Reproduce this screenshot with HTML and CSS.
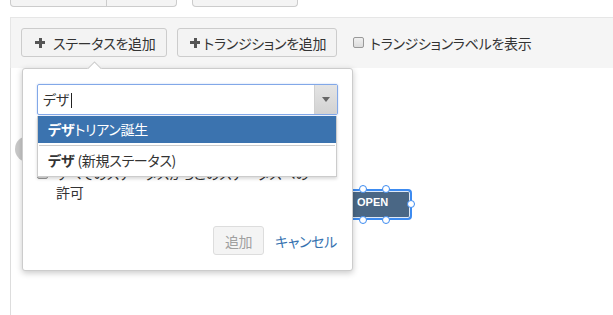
FILE: index.html
```html
<!DOCTYPE html>
<html lang="ja">
<head>
<meta charset="utf-8">
<link rel="stylesheet" href="styles.css">
</head>
<body>
<div class="tabs">
  <div class="tab-group g1"><span class="tab t1"></span><span class="tab t2"></span></div>
  <div class="tab-group g2"></div>
</div>
<div class="toolbar">
  <button class="btn"><span class="plus"></span>ステータスを追加</button>
  <button class="btn b2"><span class="plus"></span>トランジションを追加</button>
  <label class="chk"><span class="box"></span>トランジションラベルを表示</label>
</div>
<div class="canvas">
  <div class="ghost-circle"></div>
  <div class="node">
    <span class="node-label">OPEN</span>
    <span class="h h1"></span><span class="h h2"></span><span class="h h3"></span><span class="h h4"></span><span class="h h5"></span>
  </div>
  <div class="popup">
    <div class="arrow"></div>
    <div class="select">
      <span class="select-text">デザ<span class="caret"></span></span>
      <span class="select-btn"><span class="tri"></span></span>
    </div>
    <div class="allow">
      <span class="box small"></span>
      <span class="allow-text">すべてのステータスからこのステータスへの<br>許可</span>
    </div>
    <div class="actions">
      <button class="btn-disabled">追加</button>
      <a class="cancel">キャンセル</a>
    </div>
    <ul class="list">
      <li class="item active"><b>デザ</b>トリアン誕生</li>
      <li class="sep"></li>
      <li class="item"><b>デザ</b> (新規ステータス)</li>
    </ul>
  </div>
</div>
</body>
</html>
```

FILE: styles.css
```css
* { box-sizing: border-box; }
html, body { margin: 0; padding: 0; }
body {
  width: 613px;
  height: 315px;
  overflow: hidden;
  background: #fff;
  font-family: "Noto Sans CJK JP", "Liberation Sans", sans-serif;
  font-size: 14px;
  letter-spacing: -0.3px;
  color: #333;
  font-feature-settings: "palt";
}
.tabs {
  height: 17px;
  display: flex;
  padding-left: 10px;
  align-items: flex-start;
}
.tab-group {
  height: 7px;
  border: 1px solid #ccc;
  border-top: none;
  border-radius: 0 0 4px 4px;
  background: #f4f4f4;
}
.g1 { width: 167px; display: flex; }
.t1 { width: 96px; border-right: 1px solid #ccc; }
.g2 { width: 106px; margin-left: 15px; }
.toolbar {
  margin-left: 10px;
  height: 51px;
  background: #f5f5f5;
  border-top: 1px solid #e6e6e6;
  border-left: 1px solid #e6e6e6;
  display: flex;
  align-items: flex-start;
  padding: 10px 0 0 10px;
  gap: 10px;
}
.btn {
  height: 29px;
  border: 1px solid #ccc;
  border-radius: 3px;
  background: #f3f3f3;
  font: inherit;
  letter-spacing: inherit;
  color: #333;
  padding: 0 11px 0 13px;
  display: flex;
  align-items: center;
  gap: 8px;
}
.b2 { padding-left: 12px; padding-right: 10px; gap: 3px; }
.plus {
  width: 10px; height: 10px; position: relative; display: inline-block;
}
.plus::before, .plus::after {
  content: ""; position: absolute; background: #555;
}
.plus::before { left: 0; top: 3.5px; width: 10px; height: 3px; }
.plus::after { left: 3.5px; top: 0; width: 3px; height: 10px; }
.chk {
  height: 29px;
  display: flex;
  align-items: center;
  gap: 6px;
  margin-left: 6px;
}
.box {
  width: 11px; height: 11px;
  border: 1px solid #999;
  border-radius: 2px;
  background: linear-gradient(#f0f0f0, #dcdcdc);
}
.canvas {
  margin-left: 10px;
  height: 247px;
  border-left: 1px solid #ddd;
  position: relative;
}
.ghost-circle {
  position: absolute;
  left: 4px; top: 68px;
  width: 26px; height: 26px;
  border-radius: 50%;
  background: #c8c8c8;
}
.node {
  position: absolute;
  left: 331px; top: 121px;
  width: 70px; height: 31px;
  background: #4a6785;
  border: 2px solid #3d8bf0;
  border-radius: 4px;
  box-shadow: inset 0 0 0 1px #dfe9f7;
}
.node-label {
  position: absolute;
  left: 13px; top: 5px;
  color: #fff;
  font-family: "Liberation Sans", Arial, sans-serif;
  font-weight: bold;
  font-size: 11px;
  letter-spacing: 0;
}
.h {
  position: absolute;
  width: 8px; height: 8px;
  border-radius: 50%;
  background: #fff;
  border: 1.5px solid #3d8bf0;
}
.h1 { left: 15px; top: -6px; }
.h2 { left: 38px; top: -6px; }
.h3 { left: 15px; top: 25px; }
.h4 { left: 38px; top: 25px; }
.h5 { left: 63px; top: 9px; }
.popup {
  position: absolute;
  left: 11px; top: 0;
  width: 331px; height: 203px;
  background: #fff;
  border: 1px solid #ccc;
  border-radius: 3px;
  box-shadow: 0 2px 6px rgba(0,0,0,0.22);
  padding: 15px 14px 15px 14px;
  display: flex;
  flex-direction: column;
}
.arrow {
  position: absolute;
  left: 63px; top: -8px;
  width: 16px; height: 8px;
  overflow: hidden;
}
.arrow::before {
  content: "";
  position: absolute;
  left: 2px; top: 3px;
  width: 11px; height: 11px;
  background: #fff;
  border: 1px solid #ccc;
  transform: rotate(45deg);
}
.select {
  height: 31px;
  width: 301px;
  border: 1px solid #82a8e8;
  border-radius: 2px;
  display: flex;
  box-shadow: 0 0 2px rgba(90,140,230,0.4);
}
.select-text {
  flex: 1;
  padding-left: 5px;
  line-height: 29px;
  font-size: 14px;
}
.caret {
  display: inline-block;
  width: 1px; height: 15px;
  background: #222;
  vertical-align: -3px;
  margin-left: 2px;
}
.select-btn {
  width: 23px;
  background: linear-gradient(#e4e4e4, #d2d2d2);
  border-left: 1px solid #d0d0d0;
  display: flex;
  align-items: center;
  justify-content: center;
}
.tri {
  width: 0; height: 0;
  border-left: 4px solid transparent;
  border-right: 4px solid transparent;
  border-top: 5px solid #666;
}
.allow {
  margin-top: 49px;
  display: flex;
  align-items: flex-start;
  gap: 8px;
  line-height: 19px;
}
.box.small { margin-top: 4px; flex: none; }
.allow-text { width: 276px; white-space: nowrap; }
.actions {
  margin-top: auto;
  display: flex;
  justify-content: flex-end;
  align-items: center;
  gap: 11px;
}
.btn-disabled {
  height: 29px;
  width: 51px;
  border: 1px solid #ddd;
  border-radius: 3px;
  background: #f4f4f4;
  color: #a0a0a0;
  font: inherit;
  letter-spacing: inherit;
  padding: 0;
}
.cancel {
  color: #3572b0;
  margin-right: 1px;
}
.list {
  position: absolute;
  left: 14px; top: 47px;
  width: 300px;
  margin: 0; padding: 0;
  list-style: none;
  background: #fff;
  border: 1px solid #ccc;
  border-top: none;
  box-shadow: 0 2px 3px rgba(0,0,0,0.15);
}
.item {
  height: 27px;
  line-height: 27px;
  padding-left: 10px;
  font-size: 14px;
  color: #333;
}
.item b { font-weight: bold; }
.item.active {
  background: #3b73af;
  color: #fff;
}
.sep {
  height: 1px;
  margin: 2px 1px 0 1px;
  background: #ccc;
}
.list .item:last-child { height: 30px; line-height: 29px; }
```
